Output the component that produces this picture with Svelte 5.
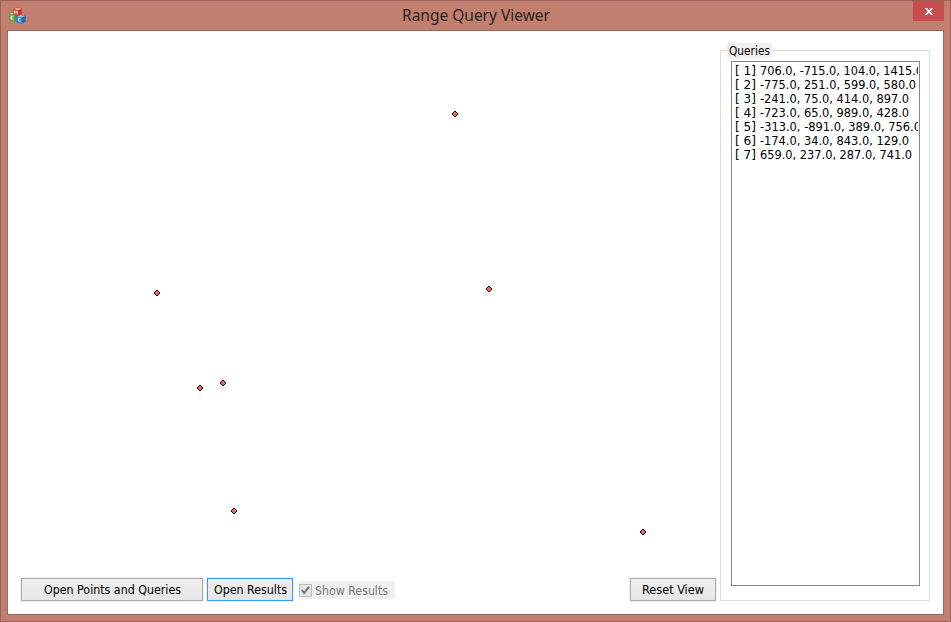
<script>
  const points = [
    [455, 114], [157, 293], [489, 289], [200, 388], [223, 383], [234, 511], [643, 532]
  ];
  const queries = [
    ['706.0, -715.0, 104.0, 1415.0', 188],
    ['-775.0, 251.0, 599.0, 580.0', 181],
    ['-241.0, 75.0, 414.0, 897.0', 174],
    ['-723.0, 65.0, 989.0, 428.0', 174],
    ['-313.0, -891.0, 389.0, 756.0', 186],
    ['-174.0, 34.0, 843.0, 129.0', 174],
    ['659.0, 237.0, 287.0, 741.0', 177]
  ];
</script>

{#snippet label(text, width, color = '#000')}
  <svg class="label" {width} height="16"><text x="0" y="12" textLength={width} lengthAdjust="spacingAndGlyphs" fill={color}>{text}</text></svg>
{/snippet}

<div class="window">
  <header>
    <svg class="app-icon" width="17" height="17" viewBox="0 0 17 17" stroke-linejoin="round">
      <path d="M.7 6.5L4 5.5l5 1V13l-4 1.3-4.3-1.8z" fill="#529640" stroke="#529640" />
      <path d="M.7 6.5L4 5.5l5 1-4 1.6z" fill="#b4d990" />
      <path d="M.7 6.5L5 8v6.3l-4.3-1.8z" fill="#7ab656" />
      <path d="M7.7 9.5l3.8-1.5 4.8 1v5.5L12.5 16l-4.8-1z" fill="#2368ab" stroke="#2d72b3" />
      <path d="M7.7 9.5l3.8-1.5 4.8 1-3.8 1.6z" fill="#9dc7e9" />
      <path d="M7.7 9.5l4.8 1.1V16l-4.8-1z" fill="#438fce" />
      <path d="M4.7 2l3.8-1.5 4 1.2V7L9.3 8.5 4.7 7.3z" fill="#bd3427" stroke="#cb4434" />
      <path d="M4.7 2l3.8-1.5 4 1.2-3.2 1.5z" fill="#f3a48e" />
      <path d="M4.7 2l4.6 1.2v5.3L4.7 7.3z" fill="#e35a46" />
      <path d="M5.5 6.5V4.2l1.4 1.2 1.3-.8v2.3M3.8 9.7H2.2v2.2h1.6M11.5 11.8l-2-.3v2.4l2 .4" fill="none" stroke="#fff" stroke-width=".9" opacity=".85" />
    </svg>
    <svg class="title" width="148" height="24"><text x="0" y="16" textLength="148" lengthAdjust="spacingAndGlyphs">Range Query Viewer</text></svg>
    <button class="close" aria-label="Close">
      <svg width="8" height="7" viewBox="0 0 8 7"><path d="M.7 0l6.6 7M7.3 0L.7 7" stroke="#fff" stroke-width="1.8" /></svg>
    </button>
  </header>
  <main>
    <section class="view">
      <div class="canvas">
        {#each points as [x, y]}
          <svg class="point" style="left:{x - 11}px;top:{y - 34}px" width="6" height="6" shape-rendering="crispEdges">
            <path d="M2 0h2v1h1v1h1v2H5v1H4v1H2V5H1V4H0V2h1V1h1z" fill="#000" />
            <path d="M2 1h2v1h1v2H4v1H2V4H1V2h1z" fill="#ff5d5d" />
          </svg>
        {/each}
      </div>
      <footer>
        <button class="btn wide">{@render label('Open Points and Queries', 137)}</button>
        <button class="btn focus">{@render label('Open Results', 73)}</button>
        <div class="check">
          <span class="box"><svg width="11" height="11" viewBox="0 0 11 11"><path d="M1.8 5l2.4 3L9 1.8" fill="none" stroke="#707070" stroke-width="2" /></svg></span>
          {@render label('Show Results', 73, '#787878')}
        </div>
        <button class="btn reset">{@render label('Reset View', 62)}</button>
      </footer>
    </section>
    <aside>
      <div class="legend">{@render label('Queries', 41)}</div>
      <div class="list">
        {#each queries as [text, width], i}
          <div class="row">{@render label(`[ ${i + 1}]`, 21)}{@render label(text, width - 25)}</div>
        {/each}
      </div>
    </aside>
  </main>
</div>

<style>
  .window { box-sizing: border-box; width: 951px; height: 622px; background: #c27f70; border: 1px solid #99625a; padding: 0 6px 6px; overflow: hidden; }
  header { height: 29px; display: flex; align-items: flex-start; justify-content: space-between; }
  .app-icon { margin: 6px 12px 0 2px; flex: none; }
  .title { margin-top: 4px; font: 15.5px "Noto Sans", "Open Sans", sans-serif; fill: #2b2421; overflow: visible; }
  .close { width: 31px; height: 20px; padding: 0; border: 0; background: #c84d4f; display: flex; align-items: center; justify-content: center; flex: none; }
  main { box-sizing: border-box; width: 937px; height: 585px; border: 1px solid #9d665a; background: #fff; display: flex; }
  .view { width: 712px; display: flex; flex-direction: column; flex: none; }
  .canvas { height: 546px; position: relative; }
  .point { position: absolute; }
  footer { display: flex; align-items: flex-start; padding-left: 12px; }
  .label { display: block; flex: none; overflow: visible; font: 12.6px "DejaVu Sans Condensed", "DejaVu Sans", sans-serif; font-stretch: condensed; }
  .label text { white-space: pre; }
  .btn { box-sizing: border-box; height: 25px; width: 88px; padding: 0; display: flex; align-items: center; justify-content: center; border: 1px solid #f0f0f0; background: linear-gradient(#f0f0f0, #e5e5e5); box-shadow: inset 0 0 0 1px #acacac; flex: none; }
  .wide { width: 184px; margin-right: 2px; }
  .focus { box-shadow: inset 0 0 0 1px #3399ff; }
  .check { display: flex; align-items: center; width: 96px; height: 18px; margin: 4px 0 0 5px; background: #f0f0f0; flex: none; }
  .check .label { margin-top: 2px; }
  .box { box-sizing: border-box; width: 13px; height: 13px; border: 1px solid #bcbcbc; background: #e6e6e6; margin-right: 3px; display: flex; flex: none; }
  .reset { margin-left: auto; margin-right: 3px; }
  aside { box-sizing: border-box; width: 210px; height: 551px; margin-top: 19px; border: 1px solid #dcdcdc; padding: 10px 9px 14px 10px; position: relative; flex: none; }
  .legend { position: absolute; left: 6px; top: -8px; height: 16px; width: 43px; padding-left: 2px; background: #f0f0f0; }
  .list { box-sizing: border-box; width: 189px; height: 525px; border: 1px solid #828790; padding: 1px 1px 0 3px; background: #fff; }
  .row { height: 14px; display: flex; gap: 4px; overflow: hidden; }
</style>
